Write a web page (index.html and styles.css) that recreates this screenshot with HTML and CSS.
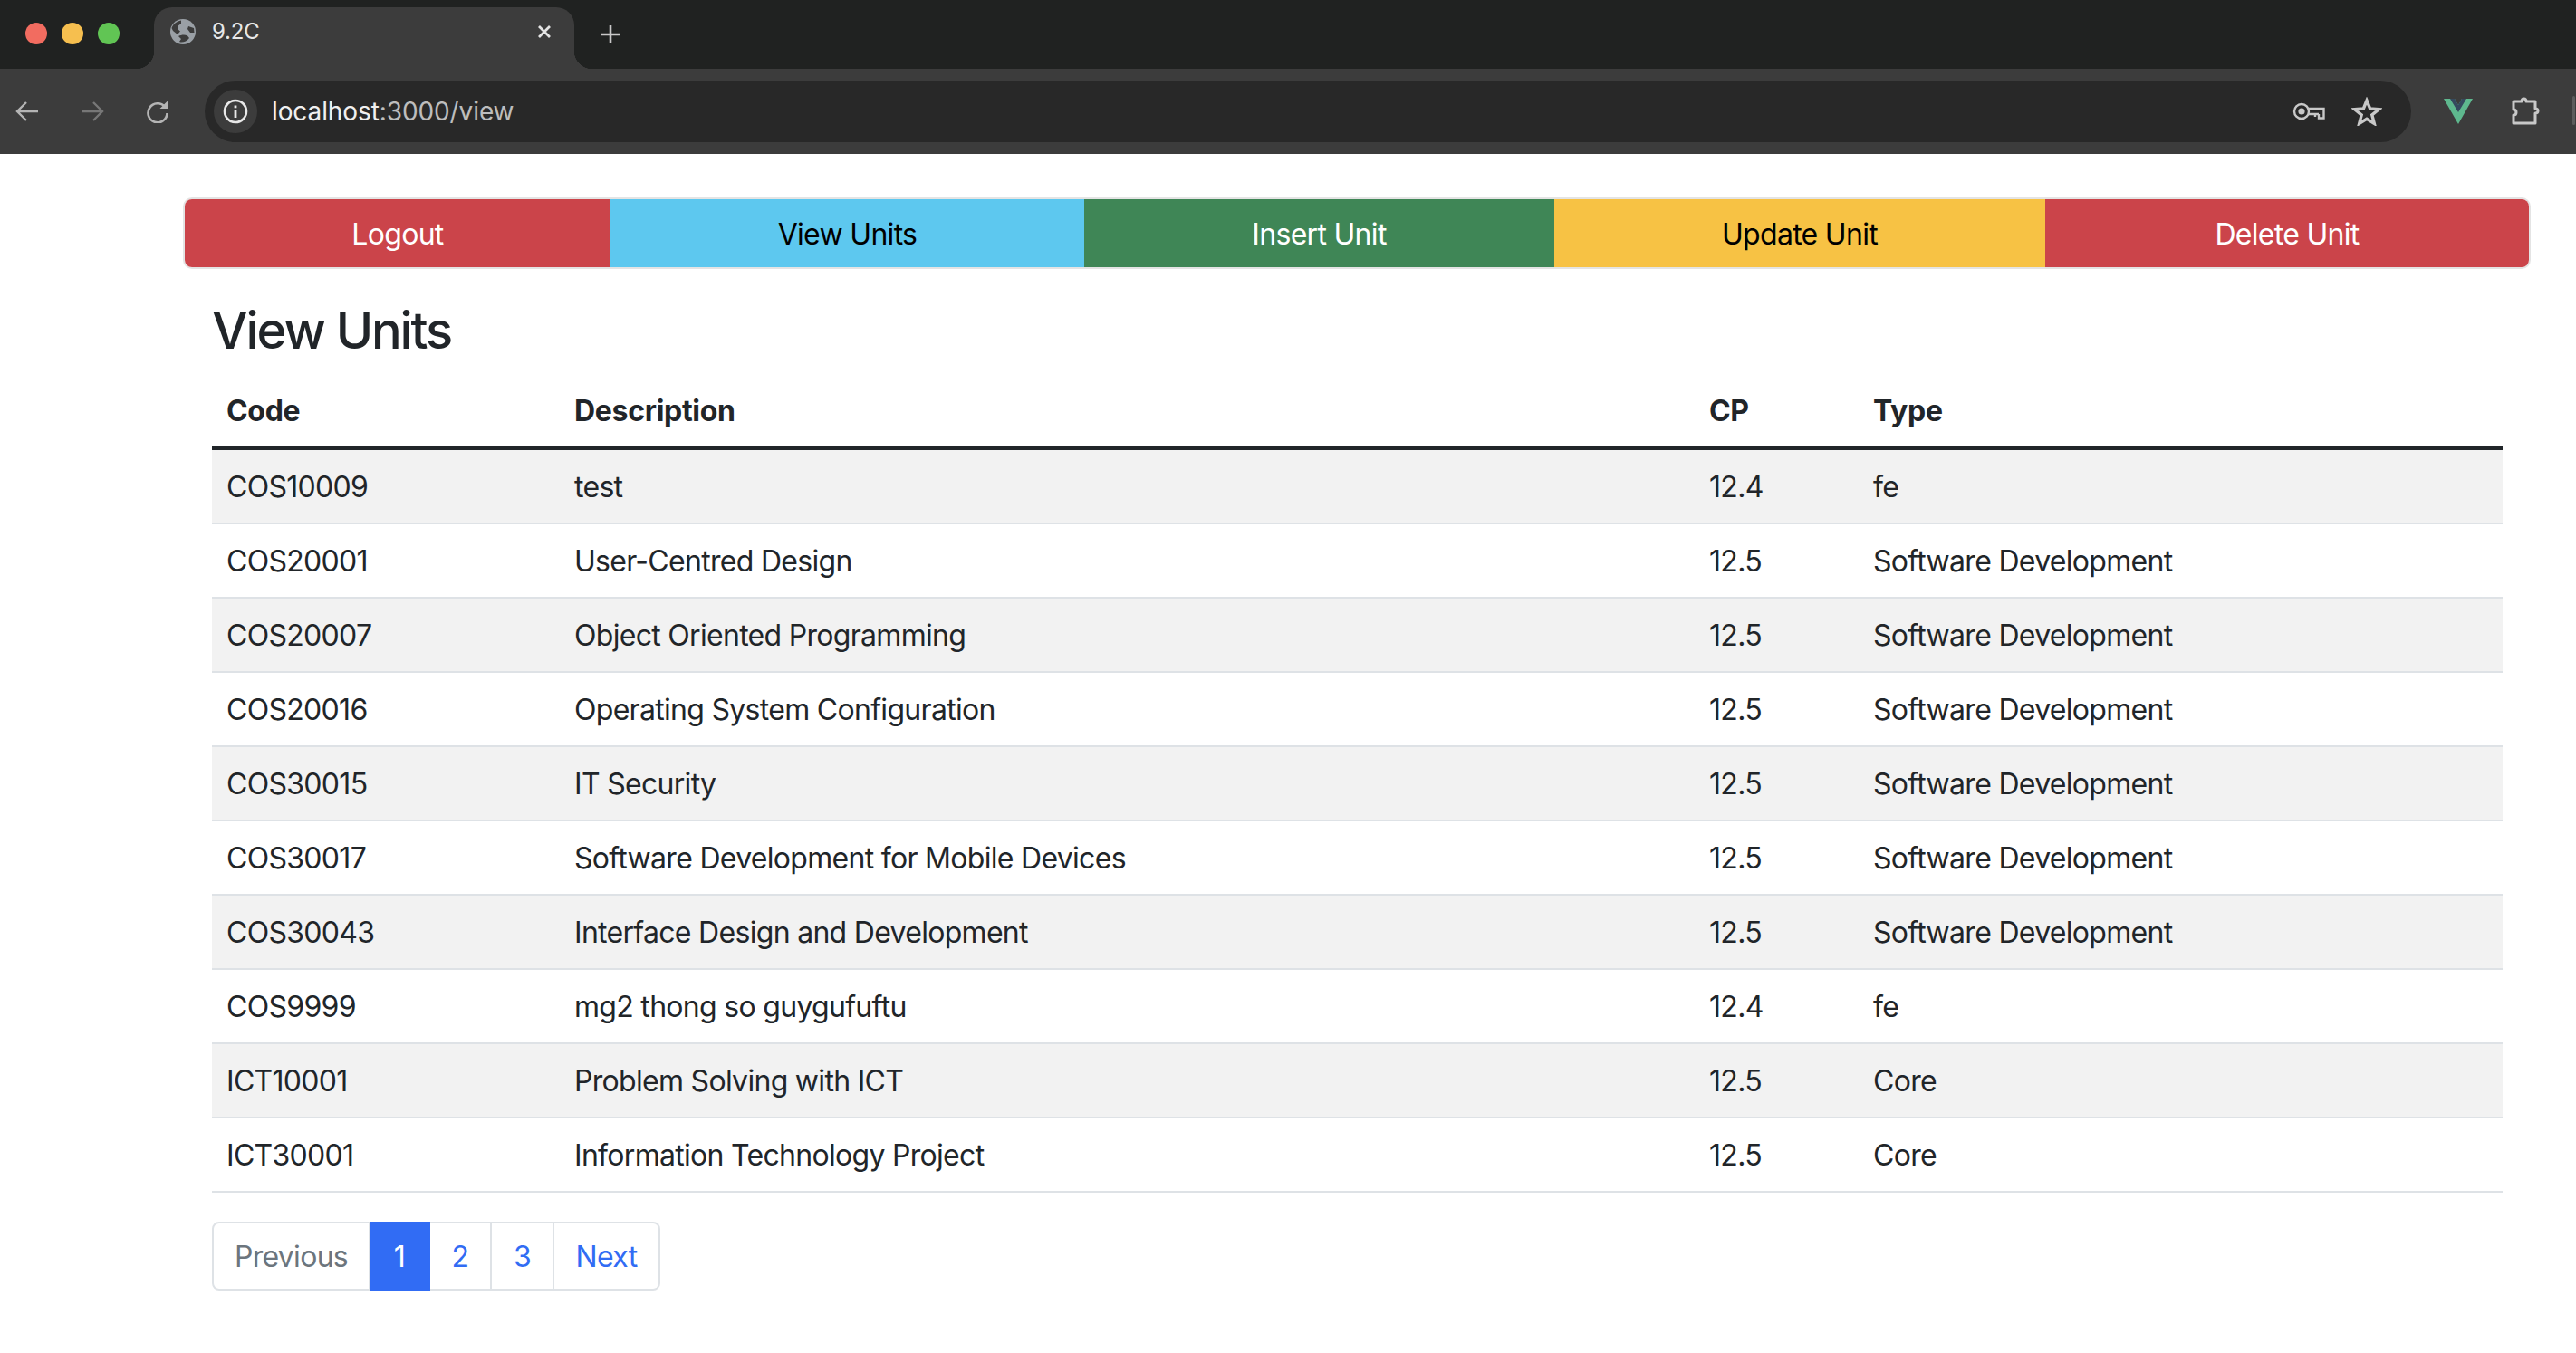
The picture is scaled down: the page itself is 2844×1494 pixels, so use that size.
FILE: index.html
```html
<!DOCTYPE html>
<html lang="en">
<head>
    <meta charset="UTF-8">
    <title>9.2C</title>
    <link rel="stylesheet" href="styles.css">
</head>
<body>
    <header class="browser">
        <div class="tab-strip">
            <div class="traffic-lights">
                <span class="light light-red"></span>
                <span class="light light-yellow"></span>
                <span class="light light-green"></span>
            </div>
            <div class="tab">
                <svg class="tab-globe" viewBox="0 0 28 28">
                    <circle cx="14" cy="14" r="14" fill="#9aa0a6"/>
                    <path d="M12 1.5 L12 5 L8 8 L8 11 L11 13.5 L8 17 L3 13 L1.5 10 C3 5.5 7 2.5 12 1.5Z" fill="#3c3c3c"/>
                    <path d="M9 19 C12 17.5 16 17 19 18.5 L21 21 C18 25 13 26.5 10 25 L12 22Z" fill="#3c3c3c"/>
                    <path d="M20 8 L26 10 L26.5 15 L22 15 L19 11Z" fill="#3c3c3c"/>
                </svg>
                <span class="tab-title">9.2C</span>
                <svg class="tab-close" viewBox="0 0 16 16">
                    <path d="M2 2 L14 14 M14 2 L2 14" stroke="#e4e4e4" stroke-width="2.8" fill="none"/>
                </svg>
            </div>
            <svg class="new-tab" viewBox="0 0 22 22">
                <path d="M11 1 V21 M1 11 H21" stroke="#c8c8c8" stroke-width="2.6" fill="none"/>
            </svg>
        </div>
        <div class="toolbar">
            <svg class="nav-icon" viewBox="0 0 26 26">
                <path d="M25 13 H3 M12 3 L2 13 L12 23" stroke="#b4b4b4" stroke-width="2.4" fill="none"/>
            </svg>
            <svg class="nav-icon nav-forward" viewBox="0 0 26 26">
                <path d="M1 13 H23 M14 3 L24 13 L14 23" stroke="#777" stroke-width="2.4" fill="none"/>
            </svg>
            <svg class="nav-icon nav-reload" viewBox="0 0 26 26">
                <path d="M21 8 A10.5 10.5 0 1 0 23.5 15" stroke="#b4b4b4" stroke-width="2.6" fill="none"/>
                <path d="M24 1.5 V10 H15.5 Z" fill="#b4b4b4"/>
            </svg>
            <div class="omnibox">
                <span class="info-chip">
                    <svg class="info-icon" viewBox="0 0 28 28">
                        <circle cx="14" cy="14" r="12" stroke="#e8e8e8" stroke-width="2.6" fill="none"/>
                        <rect x="12.6" y="12" width="2.8" height="9" fill="#e8e8e8"/>
                        <rect x="12.6" y="7.5" width="2.8" height="2.8" fill="#e8e8e8"/>
                    </svg>
                </span>
                <span class="url">localhost<span class="url-rest">:3000/view</span></span>
                <svg class="key-icon" viewBox="0 0 36 20">
                    <circle cx="10" cy="10" r="8" stroke="#c8c8c8" stroke-width="2.4" fill="none"/>
                    <circle cx="10" cy="10" r="3.6" fill="#c8c8c8"/>
                    <path d="M18 7 H34.5 V17.5 H29 V13 M25 13 V16 M18 13 H29" stroke="#c8c8c8" stroke-width="2.4" fill="none"/>
                </svg>
                <svg class="star-icon" viewBox="0 0 34 32">
                    <path d="M17 4 L20.6 13 L30.5 13.7 L22.8 19.9 L25.3 29.4 L17 24.2 L8.7 29.4 L11.2 19.9 L3.5 13.7 L13.4 13Z" stroke="#c8c8c8" stroke-width="3.4" fill="none"/>
                </svg>
            </div>
            <svg class="vue-icon" viewBox="0 0 32 28">
                <path d="M0 0 H12 L16 7 L20 0 H32 L16 28Z" fill="#5eb88e"/>
                <path d="M7 0 H12 L16 7 L20 0 H25 L16 15Z" fill="#35495e"/>
            </svg>
            <svg class="puzzle-icon" viewBox="0 0 32 32">
                <path d="M3 5 H12 C12 1 17 1 17 5 H27 V13 C31 13 31 18 27 18 V29 H3 V20 C7 20 7 14 3 14Z" stroke="#c8c8c8" stroke-width="3" stroke-linejoin="round" fill="none"/>
            </svg>
            <span class="side-handle"></span>
        </div>
    </header>

    <nav class="unit-nav">
        <a class="nav-btn btn-red btn-logout" href="#">Logout</a>
        <a class="nav-btn btn-cyan btn-view" href="#">View Units</a>
        <a class="nav-btn btn-green btn-insert" href="#">Insert Unit</a>
        <a class="nav-btn btn-yellow btn-update" href="#">Update Unit</a>
        <a class="nav-btn btn-red btn-delete" href="#">Delete Unit</a>
    </nav>

    <main class="content">
        <h3 class="page-title">View Units</h3>
        <table class="unit-table">
            <colgroup>
                <col class="col-code">
                <col class="col-desc">
                <col class="col-cp">
                <col class="col-type">
            </colgroup>
            <thead>
                <tr>
                    <th>Code</th>
                    <th>Description</th>
                    <th>CP</th>
                    <th>Type</th>
                </tr>
            </thead>
            <tbody>
                <tr><td>COS10009</td><td>test</td><td>12.4</td><td>fe</td></tr>
                <tr><td>COS20001</td><td>User-Centred Design</td><td>12.5</td><td>Software Development</td></tr>
                <tr><td>COS20007</td><td>Object Oriented Programming</td><td>12.5</td><td>Software Development</td></tr>
                <tr><td>COS20016</td><td>Operating System Configuration</td><td>12.5</td><td>Software Development</td></tr>
                <tr><td>COS30015</td><td>IT Security</td><td>12.5</td><td>Software Development</td></tr>
                <tr><td>COS30017</td><td>Software Development for Mobile Devices</td><td>12.5</td><td>Software Development</td></tr>
                <tr><td>COS30043</td><td>Interface Design and Development</td><td>12.5</td><td>Software Development</td></tr>
                <tr><td>COS9999</td><td>mg2 thong so guygufuftu</td><td>12.4</td><td>fe</td></tr>
                <tr><td>ICT10001</td><td>Problem Solving with ICT</td><td>12.5</td><td>Core</td></tr>
                <tr><td>ICT30001</td><td>Information Technology Project</td><td>12.5</td><td>Core</td></tr>
            </tbody>
        </table>
        <ul class="pagination">
            <li class="page-item page-prev">Previous</li>
            <li class="page-item page-one active">1</li>
            <li class="page-item page-two">2</li>
            <li class="page-item page-three">3</li>
            <li class="page-item page-next">Next</li>
        </ul>
    </main>
</body>
</html>
```

FILE: styles.css
```css
body {
    margin: 0;
    background-color: #fff;
    color: #212529;
    font-family: 'Inter', 'Liberation Sans', sans-serif;
    font-size: 32px;
    line-height: 48px;
    letter-spacing: -0.7px;
}

/* browser chrome */
.browser {
    height: 170px;
    background-color: #3c3c3c;
}

.tab-strip {
    display: flex;
    align-items: flex-end;
    height: 76px;
    background-color: #202221;
}

.traffic-lights {
    display: flex;
    gap: 16px;
    align-self: flex-start;
    margin: 25px 0 0 28px;
}

.light {
    width: 24px;
    height: 24px;
    border-radius: 50%;
}

.light-red { background-color: #f26c60; }
.light-yellow { background-color: #f6bf4f; }
.light-green { background-color: #61c554; }

.tab {
    position: relative;
    display: flex;
    align-items: center;
    width: 464px;
    height: 68px;
    margin-left: 38px;
    padding-bottom: 14px;
    box-sizing: border-box;
    background-color: #3c3c3c;
    border-radius: 20px 20px 0 0;
}

.tab::before,
.tab::after {
    content: "";
    position: absolute;
    bottom: 0;
    width: 20px;
    height: 20px;
}

.tab::before {
    left: -20px;
    background: radial-gradient(circle at 0 0, #202221 20px, #3c3c3c 20.5px);
}

.tab::after {
    right: -20px;
    background: radial-gradient(circle at 100% 0, #202221 20px, #3c3c3c 20.5px);
}

.tab-globe {
    width: 28px;
    height: 28px;
    margin-left: 18px;
}

.tab-title {
    margin-left: 18px;
    flex: 1;
    color: #e8e8e8;
    font-size: 24px;
    line-height: 32px;
    letter-spacing: -0.2px;
}

.tab-close {
    width: 16px;
    height: 16px;
    margin-right: 25px;
}

.new-tab {
    width: 22px;
    height: 22px;
    margin: 0 0 27px 29px;
}

.toolbar {
    display: flex;
    align-items: center;
    height: 94px;
    position: relative;
}

.nav-icon {
    width: 26px;
    height: 26px;
    margin-left: 17px;
}

.nav-forward { margin-left: 46px; }
.nav-reload { margin-left: 46px; }

.omnibox {
    display: flex;
    align-items: center;
    width: 2436px;
    height: 68px;
    margin-left: 39px;
    background-color: #282828;
    border-radius: 34px;
}

.info-chip {
    display: flex;
    align-items: center;
    justify-content: center;
    width: 48px;
    height: 48px;
    margin-left: 10px;
    background-color: #3c3c3c;
    border-radius: 50%;
}

.info-icon {
    width: 28px;
    height: 28px;
}

.url {
    flex: 1;
    margin-left: 16px;
    color: #f0f0f0;
    font-size: 28px;
    line-height: 36px;
    letter-spacing: -0.1px;
}

.url-rest { color: #bdbdbd; }

.key-icon {
    width: 36px;
    height: 20px;
    margin-right: 29px;
}

.star-icon {
    width: 34px;
    height: 32px;
    margin-right: 32px;
}

.vue-icon {
    width: 32px;
    height: 28px;
    margin-left: 36px;
}

.puzzle-icon {
    width: 32px;
    height: 32px;
    margin-left: 42px;
}

.side-handle {
    position: absolute;
    right: 1px;
    top: 30px;
    width: 3px;
    height: 32px;
    background-color: #5c5c5c;
    border-radius: 2px;
}

/* unit nav */
.unit-nav {
    display: flex;
    width: 2592px;
    height: 79px;
    margin: 48px 0 0 202px;
    box-sizing: border-box;
    border: 2px solid #e4e4e4;
    border-radius: 10px;
    overflow: hidden;
}

.nav-btn {
    display: flex;
    align-items: center;
    justify-content: center;
    padding-top: 2px;
    text-decoration: none;
}

.btn-logout { width: 470px; }
.btn-view { width: 523px; }
.btn-insert { width: 519px; }
.btn-update { width: 542px; }
.btn-delete { flex: 1; }

.btn-red { background-color: #cb444a; color: #fff; }
.btn-cyan { background-color: #5dc8ef; color: #000; }
.btn-green { background-color: #3f8656; color: #fff; }
.btn-yellow { background-color: #f7c244; color: #000; }

/* table */
.content {
    width: 2529px;
    margin-left: 234px;
}

.page-title {
    margin: 35px 0 16px;
    font-size: 56px;
    line-height: 67px;
    font-weight: 500;
    letter-spacing: -2.1px;
}

.unit-table {
    width: 100%;
    table-layout: fixed;
    border-collapse: collapse;
}

.col-code { width: 384px; }
.col-desc { width: 1253px; }
.col-cp { width: 181px; }
.col-type { width: 711px; }

.unit-table th {
    padding: 15px 16px;
    height: 48px;
    text-align: left;
    font-weight: 700;
    letter-spacing: -0.3px;
    border-bottom: 4px solid #212529;
}

.unit-table td {
    padding: 17px 16px 15px;
    border-bottom: 2px solid #dee2e6;
}

.unit-table tbody tr:nth-child(odd) {
    background-color: #f2f2f2;
}

/* pagination */
.pagination {
    display: flex;
    width: 495px;
    height: 76px;
    margin: 32px 0 0;
    padding: 0;
    list-style: none;
}

.page-item {
    display: flex;
    align-items: center;
    justify-content: center;
    box-sizing: border-box;
    padding-top: 2px;
    color: #316cf4;
    border: 2px solid #dee2e6;
    border-left: 0;
}

.page-prev {
    width: 175px;
    color: #6c757d;
    border-left: 2px solid #dee2e6;
    border-radius: 8px 0 0 8px;
}

.page-one { width: 66px; }
.page-two { width: 68px; }
.page-three { width: 69px; }

.page-next {
    flex: 1;
    border-radius: 0 8px 8px 0;
}

.page-item.active {
    color: #fff;
    background-color: #316cf4;
    border-color: #316cf4;
}
```
